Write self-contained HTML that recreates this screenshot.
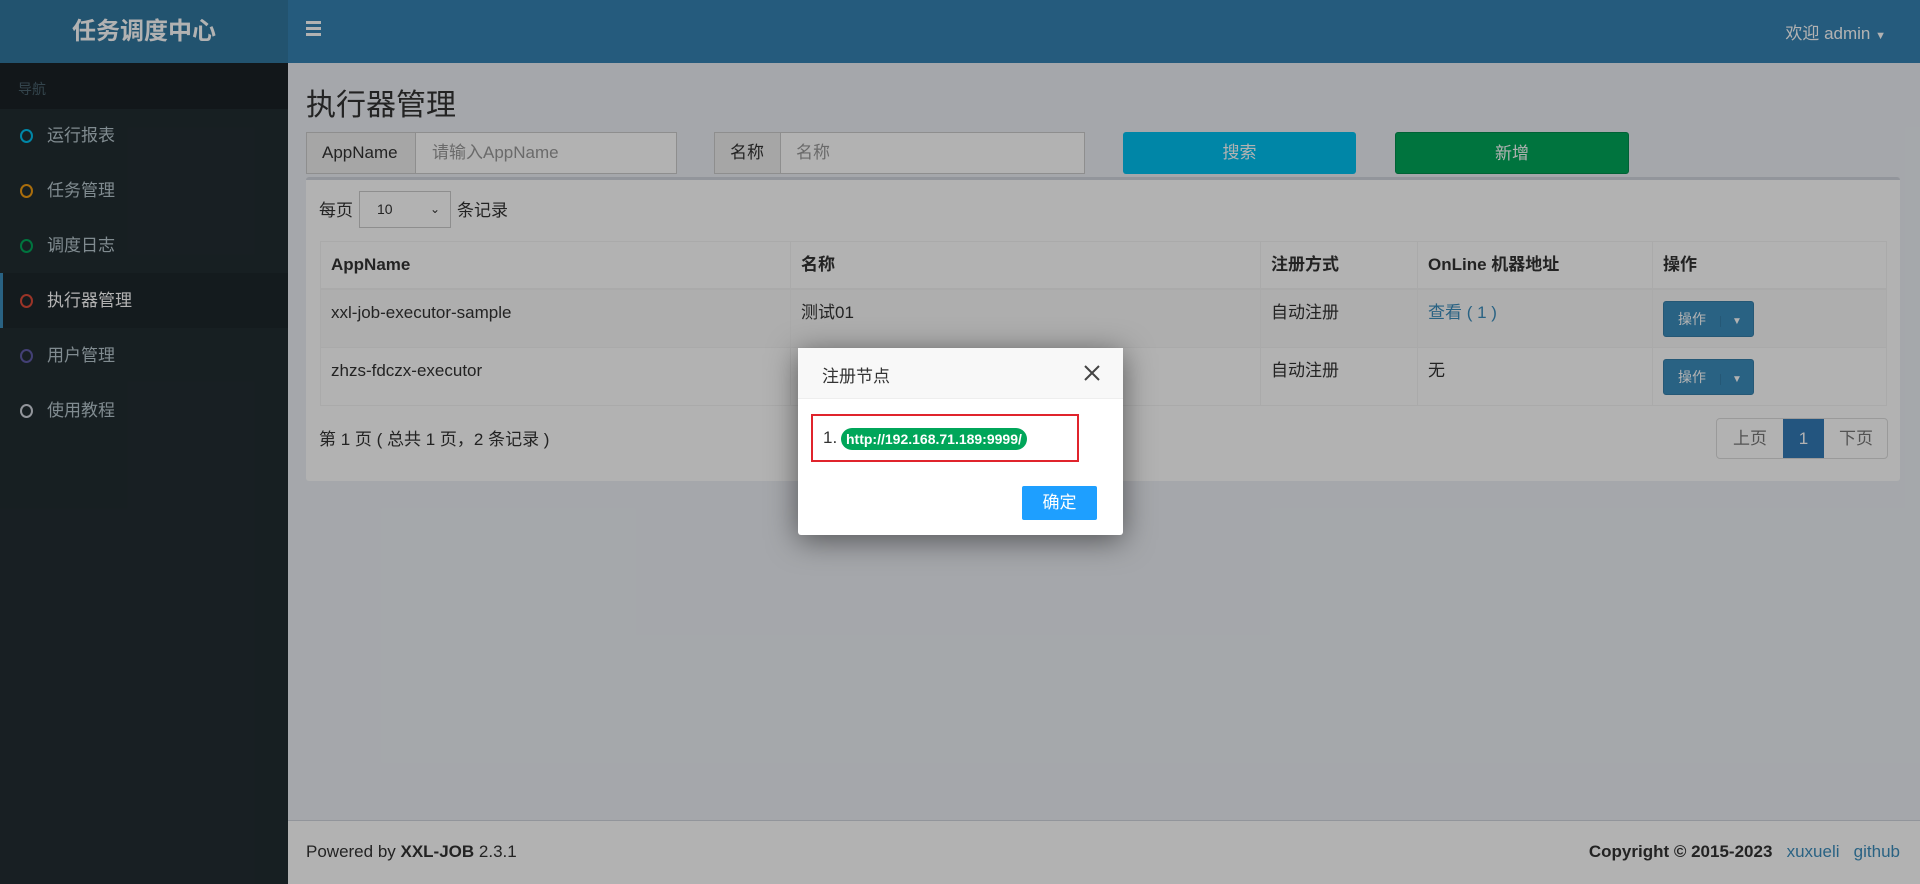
<!DOCTYPE html>
<html><head><meta charset="utf-8"><style>
*{box-sizing:border-box;margin:0;padding:0}
body{width:1920px;height:884px;overflow:hidden;font-family:"Liberation Sans","Noto Sans CJK SC",sans-serif;font-size:17px;color:#333;background:#ecf0f5;position:relative}
.abs{position:absolute}
.hdr{left:0;top:0;width:1920px;height:63px;background:#3683b3}
.logo{left:0;top:0;width:288px;height:63px;background:#32779f;color:#fff;font-weight:bold;font-size:24px;text-align:center;line-height:63px}
.side{left:0;top:63px;width:288px;height:821px;background:#222d32}
.navh{left:0;top:63px;width:288px;height:46px;background:#1a2226;color:#4b646f;font-size:14px;padding:16px 0 0 18px}
.item{left:0;width:288px;height:55px;color:#b8c7ce;font-size:17px;line-height:55px;padding-left:47px}
.item i{position:absolute;left:20px;top:21px;width:13px;height:14px;border:2.5px solid;border-radius:50%}
.item.act{background:#1e282c;color:#fff;border-left:3px solid #3c8dbc}
.box{background:#fff;border-top:3px solid #d2d6de;border-radius:3px}
.inp{height:42px;border:1px solid #ccc;background:#fff;font-size:17px;line-height:40px}
.lab{background:#eee;border-right:1px solid #ccc;padding-left:15px}
.btn{border-radius:3px;color:#fff;text-align:center;line-height:42px;font-size:17px;height:42px}
td,th{border:1px solid #f4f4f4;text-align:left;vertical-align:top;padding:12px 10px 10px;line-height:22px}
table{border-collapse:collapse;font-size:17px}
th{font-weight:bold;height:47px;border-bottom:2px solid #f4f4f4}
.op{display:inline-block;height:36px;background:#3c8dbc;border:1px solid #367fa9;border-radius:3px;color:#fff;font-size:14px;line-height:34px;margin-top:-1px}
.overlay{left:0;top:0;width:1920px;height:884px;background:rgba(0,0,0,.3)}
</style></head><body>
<div class="abs hdr"></div>
<div class="abs logo">任务调度中心</div>
<div class="abs" style="left:306px;top:21px;width:15px;height:3px;background:#fff;box-shadow:0 6px 0 #fff,0 12px 0 #fff"></div>
<div class="abs" style="right:34px;top:19px;color:#fff;font-size:17px">欢迎 admin <span style="font-size:11px">▼</span></div>
<div class="abs side"></div>
<div class="abs navh">导航</div>
<div class="abs item" style="top:108px"><i style="color:#00c0ef"></i>运行报表</div>
<div class="abs item" style="top:163px"><i style="color:#f39c12"></i>任务管理</div>
<div class="abs item" style="top:218px"><i style="color:#00a65a"></i>调度日志</div>
<div class="abs item act" style="top:273px;padding-left:44px"><i style="color:#dd4b39;left:17px"></i>执行器管理</div>
<div class="abs item" style="top:328px"><i style="color:#605ca8"></i>用户管理</div>
<div class="abs item" style="top:383px"><i style="color:#d2d6de"></i>使用教程</div>

<div class="abs" style="left:306px;top:80px;font-size:30px;color:#333">执行器管理</div>
<div class="abs inp" style="left:306px;top:132px;width:371px"><span class="abs lab" style="left:0;top:0;width:109px;height:40px">AppName</span><span class="abs" style="left:125px;color:#999">请输入AppName</span></div>
<div class="abs inp" style="left:714px;top:132px;width:371px"><span class="abs lab" style="left:0;top:0;width:66px;height:40px">名称</span><span class="abs" style="left:81px;color:#999">名称</span></div>
<div class="abs btn" style="left:1123px;top:132px;width:233px;background:#00c0ef">搜索</div>
<div class="abs btn" style="left:1395px;top:132px;width:234px;background:#00a65a;border:1px solid #008d4c">新增</div>

<div class="abs box" style="left:306px;top:177px;width:1594px;height:304px"></div>
<div class="abs" style="left:319px;top:196px">每页</div>
<div class="abs" style="left:359px;top:191px;width:92px;height:37px;border:1px solid #ccc;background:#fff;font-size:14px;line-height:35px;padding-left:17px">10<span style="position:absolute;right:10px;font-size:12px">⌄</span></div>
<div class="abs" style="left:457px;top:196px">条记录</div>
<table class="abs" style="left:320px;top:241px;width:1567px">
<tr><th style="width:470px">AppName</th><th style="width:470px">名称</th><th style="width:157px">注册方式</th><th style="width:235px">OnLine 机器地址</th><th>操作</th></tr>
<tr style="background:#f9f9f9;height:59px"><td>xxl-job-executor-sample</td><td>测试01</td><td>自动注册</td><td style="color:#3c8dbc">查看 ( 1 )</td><td><span class="op"><span style="padding:0 14px">操作</span><span style="border-left:1px solid #367fa9;padding:0 11px;font-size:10px">▼</span></span></td></tr>
<tr style="height:58px"><td>zhzs-fdczx-executor</td><td></td><td>自动注册</td><td>无</td><td><span class="op"><span style="padding:0 14px">操作</span><span style="border-left:1px solid #367fa9;padding:0 11px;font-size:10px">▼</span></span></td></tr>
</table>
<div class="abs" style="left:319px;top:425px">第 1 页 ( 总共 1 页，2 条记录 )</div>
<div class="abs" style="left:1716px;top:418px;width:172px;height:41px;border:1px solid #ddd;border-radius:4px;background:#fff;line-height:39px;font-size:17px">
<span class="abs" style="left:0;width:66px;text-align:center;color:#777">上页</span>
<span class="abs" style="left:66px;width:41px;height:39px;background:#337ab7;color:#fff;text-align:center">1</span>
<span class="abs" style="left:107px;width:64px;text-align:center;color:#777">下页</span></div>

<div class="abs" style="left:288px;top:820px;width:1632px;height:64px;background:#fff;border-top:1px solid #d2d6de"></div>
<div class="abs" style="left:306px;top:842px;font-size:17px">Powered by <b>XXL-JOB</b> 2.3.1</div>
<div class="abs" style="right:20px;top:842px;font-size:17px"><b>Copyright © 2015-2023</b> &nbsp; <span style="color:#3c8dbc">xuxueli</span> &nbsp; <span style="color:#3c8dbc">github</span></div>

<div class="abs overlay"></div>

<div class="abs" style="left:798px;top:348px;width:325px;height:187px;background:#fff;border-radius:3px;box-shadow:0 5px 30px rgba(0,0,0,.5)">
<div class="abs" style="left:0;top:0;width:325px;height:51px;background:#f8f8f8;border-bottom:1px solid #eee"></div>
<div class="abs" style="left:24px;top:14px;font-size:17px;color:#333">注册节点</div>
<svg class="abs" style="left:286px;top:17px" width="16" height="16" viewBox="0 0 16 16"><path d="M1 1L15 15M15 1L1 15" stroke="#444" stroke-width="2"/></svg>
<div class="abs" style="left:13px;top:66px;width:268px;height:48px;border:2px solid #e0242c"></div>
<div class="abs" style="left:25px;top:80px;font-size:17px;color:#333">1.</div>
<div class="abs" style="left:43px;top:80px;height:22px;line-height:22px;padding:0 5px;background:#00a65a;color:#fff;font-weight:bold;font-size:14px;border-radius:11px">http://192.168.71.189:9999/</div>
<div class="abs" style="left:224px;top:138px;width:75px;height:34px;background:#1e9fff;color:#fff;font-size:17px;text-align:center;line-height:34px;border-radius:2px">确定</div>
</div>
</body></html>
